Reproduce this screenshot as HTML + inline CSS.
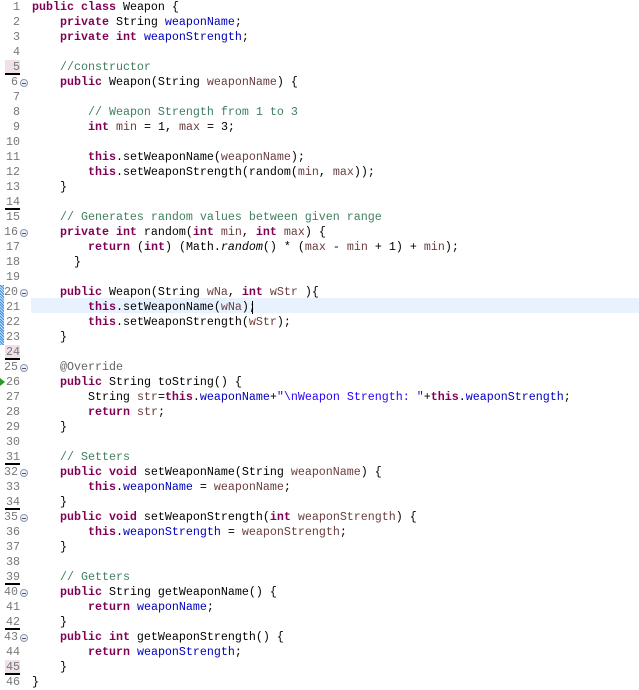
<!DOCTYPE html>
<html><head><meta charset="utf-8"><style>
body{margin:0;background:#fff;width:639px;height:685px;overflow:hidden;position:relative;font-family:"Liberation Mono",monospace;font-size:11.67px}
.l{position:absolute;left:0;width:639px;height:15px;line-height:15px;white-space:pre}
.n{position:absolute;left:0;width:20px;text-align:right;color:#787878}
.c{position:absolute;left:32px;color:#000}
.k{color:#7f0055;font-weight:bold}
.f{color:#0000c0}
.m{color:#3f7f5f}
.s{color:#2a00ff}
.a{color:#646464}
.p{color:#6a3e3e}
.u .n{border-bottom:2px solid #000;height:13px;left:5px;width:15px}
.pk .n{background:#efe0ea}
.fd .n{width:18px}
.fold{position:absolute;left:20px;top:4px;width:6px;height:6px;border:1px solid #8a9aa8;border-radius:50%;background:#eef}
.fold:after{content:"";position:absolute;left:1px;top:3px;width:4px;height:1px;background:#556}
</style></head><body>
<div style="position:absolute;left:31px;top:298px;width:608px;height:15px;background:#e8f2fe"></div>
<div style="position:absolute;left:0;top:285px;width:4px;height:60px;background:repeating-linear-gradient(45deg,#3c8ee0 0 1px,#c8e0f8 1px 2px)"></div>
<div style="position:absolute;left:0;top:378px;width:0;height:0;border-left:5px solid #2a9a2a;border-top:4px solid transparent;border-bottom:4px solid transparent"></div>
<div style="position:absolute;left:252px;top:301px;width:1px;height:13px;background:#000"></div>

<div class="l" style="top:0px"><span class="n">1</span><span class="c"><span class="k">public class</span> Weapon {</span></div>
<div class="l" style="top:15px"><span class="n">2</span><span class="c">    <span class="k">private</span> String <span class="f">weaponName</span>;</span></div>
<div class="l" style="top:30px"><span class="n">3</span><span class="c">    <span class="k">private int</span> <span class="f">weaponStrength</span>;</span></div>
<div class="l" style="top:45px"><span class="n">4</span></div>
<div class="l u pk" style="top:60px"><span class="n">5</span><span class="c">    <span class="m">//constructor</span></span></div>
<div class="l fd" style="top:75px"><span class="n">6</span><span class="fold"></span><span class="c">    <span class="k">public</span> Weapon(String <span class="p">weaponName</span>) {</span></div>
<div class="l" style="top:90px"><span class="n">7</span></div>
<div class="l" style="top:105px"><span class="n">8</span><span class="c">        <span class="m">// Weapon Strength from 1 to 3</span></span></div>
<div class="l" style="top:120px"><span class="n">9</span><span class="c">        <span class="k">int</span> <span class="p">min</span> = 1, <span class="p">max</span> = 3;</span></div>
<div class="l" style="top:135px"><span class="n">10</span></div>
<div class="l" style="top:150px"><span class="n">11</span><span class="c">        <span class="k">this</span>.setWeaponName(<span class="p">weaponName</span>);</span></div>
<div class="l" style="top:165px"><span class="n">12</span><span class="c">        <span class="k">this</span>.setWeaponStrength(random(<span class="p">min</span>, <span class="p">max</span>));</span></div>
<div class="l" style="top:180px"><span class="n">13</span><span class="c">    }</span></div>
<div class="l u" style="top:195px"><span class="n">14</span></div>
<div class="l" style="top:210px"><span class="n">15</span><span class="c">    <span class="m">// Generates random values between given range</span></span></div>
<div class="l fd" style="top:225px"><span class="n">16</span><span class="fold"></span><span class="c">    <span class="k">private int</span> random(<span class="k">int</span> <span class="p">min</span>, <span class="k">int</span> <span class="p">max</span>) {</span></div>
<div class="l" style="top:240px"><span class="n">17</span><span class="c">        <span class="k">return</span> (<span class="k">int</span>) (Math.<i>random</i>() * (<span class="p">max</span> - <span class="p">min</span> + 1) + <span class="p">min</span>);</span></div>
<div class="l" style="top:255px"><span class="n">18</span><span class="c">      }</span></div>
<div class="l" style="top:270px"><span class="n">19</span></div>
<div class="l fd" style="top:285px"><span class="n">20</span><span class="fold"></span><span class="c">    <span class="k">public</span> Weapon(String <span class="p">wNa</span>, <span class="k">int</span> <span class="p">wStr</span> ){</span></div>
<div class="l" style="top:300px"><span class="n">21</span><span class="c">        <span class="k">this</span>.setWeaponName(<span class="p">wNa</span>);</span></div>
<div class="l" style="top:315px"><span class="n">22</span><span class="c">        <span class="k">this</span>.setWeaponStrength(<span class="p">wStr</span>);</span></div>
<div class="l" style="top:330px"><span class="n">23</span><span class="c">    }</span></div>
<div class="l u pk" style="top:345px"><span class="n">24</span></div>
<div class="l fd" style="top:360px"><span class="n">25</span><span class="fold"></span><span class="c">    <span class="a">@Override</span></span></div>
<div class="l" style="top:375px"><span class="n">26</span><span class="c">    <span class="k">public</span> String toString() {</span></div>
<div class="l" style="top:390px"><span class="n">27</span><span class="c">        String <span class="p">str</span>=<span class="k">this</span>.<span class="f">weaponName</span>+<span class="s">"\nWeapon Strength: "</span>+<span class="k">this</span>.<span class="f">weaponStrength</span>;</span></div>
<div class="l" style="top:405px"><span class="n">28</span><span class="c">        <span class="k">return</span> <span class="p">str</span>;</span></div>
<div class="l" style="top:420px"><span class="n">29</span><span class="c">    }</span></div>
<div class="l" style="top:435px"><span class="n">30</span></div>
<div class="l u" style="top:450px"><span class="n">31</span><span class="c">    <span class="m">// Setters</span></span></div>
<div class="l fd" style="top:465px"><span class="n">32</span><span class="fold"></span><span class="c">    <span class="k">public void</span> setWeaponName(String <span class="p">weaponName</span>) {</span></div>
<div class="l" style="top:480px"><span class="n">33</span><span class="c">        <span class="k">this</span>.<span class="f">weaponName</span> = <span class="p">weaponName</span>;</span></div>
<div class="l u" style="top:495px"><span class="n">34</span><span class="c">    }</span></div>
<div class="l fd" style="top:510px"><span class="n">35</span><span class="fold"></span><span class="c">    <span class="k">public void</span> setWeaponStrength(<span class="k">int</span> <span class="p">weaponStrength</span>) {</span></div>
<div class="l" style="top:525px"><span class="n">36</span><span class="c">        <span class="k">this</span>.<span class="f">weaponStrength</span> = <span class="p">weaponStrength</span>;</span></div>
<div class="l" style="top:540px"><span class="n">37</span><span class="c">    }</span></div>
<div class="l" style="top:555px"><span class="n">38</span></div>
<div class="l u" style="top:570px"><span class="n">39</span><span class="c">    <span class="m">// Getters</span></span></div>
<div class="l fd" style="top:585px"><span class="n">40</span><span class="fold"></span><span class="c">    <span class="k">public</span> String getWeaponName() {</span></div>
<div class="l" style="top:600px"><span class="n">41</span><span class="c">        <span class="k">return</span> <span class="f">weaponName</span>;</span></div>
<div class="l u" style="top:615px"><span class="n">42</span><span class="c">    }</span></div>
<div class="l fd" style="top:630px"><span class="n">43</span><span class="fold"></span><span class="c">    <span class="k">public int</span> getWeaponStrength() {</span></div>
<div class="l" style="top:645px"><span class="n">44</span><span class="c">        <span class="k">return</span> <span class="f">weaponStrength</span>;</span></div>
<div class="l u pk" style="top:660px"><span class="n">45</span><span class="c">    }</span></div>
<div class="l" style="top:675px"><span class="n">46</span><span class="c">}</span></div>
</body></html>
